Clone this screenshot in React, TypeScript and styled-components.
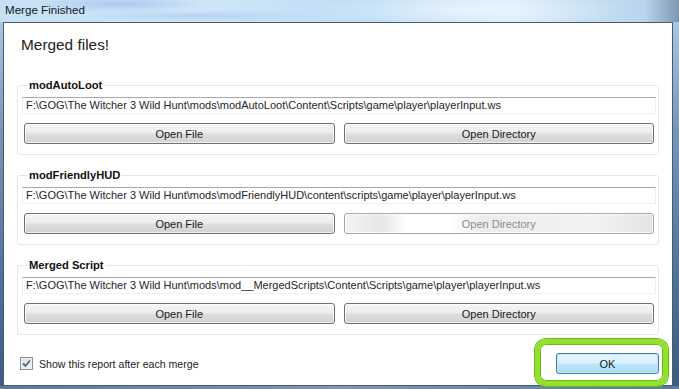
import React, { useState } from 'react'
import styled, { createGlobalStyle } from 'styled-components'

const GlobalStyle = createGlobalStyle`
  html, body {
    margin: 0;
    padding: 0;
    width: 679px;
    height: 389px;
    overflow: hidden;
    background: #3d5f86;
  }
  * {
    box-sizing: border-box;
  }
`

const Screen = styled.div`
  width: 679px;
  height: 389px;
  display: flex;
  flex-direction: column;
  font-family: 'Liberation Sans', Arial, sans-serif;
  color: #1e1e1e;
  background: linear-gradient(180deg, #9fc3e4 0px, #6e93b8 120px, #45688f 260px, #34557b 389px);
`

const TitleBar = styled.div`
  height: 22px;
  flex: none;
  display: flex;
  align-items: center;
  padding: 0 0 3px 5px;
  font-size: 11.6px;
  color: #101820;
  background:
    radial-gradient(ellipse 90px 8px at 120px 4px, rgba(120, 150, 230, 0.35), transparent),
    radial-gradient(ellipse 120px 6px at 200px 16px, rgba(140, 160, 230, 0.3), transparent),
    radial-gradient(ellipse 160px 18px at 470px 10px, rgba(255, 255, 255, 0.55), transparent),
    linear-gradient(90deg, #c6e0f4 0%, #cfe6f8 30%, #bddcf5 55%, #d5ecfb 75%, #b9d4ec 95%, #7d97b3 100%);
`

const FrameRow = styled.div`
  flex: 1;
  display: flex;
  min-height: 0;
`

const SideFrame = styled.div<{ $w: number }>`
  width: ${({ $w }) => $w}px;
  flex: none;
  background: linear-gradient(180deg, #a9c6e2 0%, #7696b9 30%, #4f7299 70%, #3a5c83 100%);
`

const Client = styled.div`
  flex: 1;
  display: flex;
  flex-direction: column;
  background: #ffffff;
  border: 1px solid #4a5a6c;
  padding: 0 13px;
`

const Heading = styled.div`
  font-size: 15.4px;
  line-height: 20px;
  padding: 12px 0 0 4px;
  height: 55px;
  color: #222;
`

const Groups = styled.div`
  display: flex;
  flex-direction: column;
  gap: 13px;
`

const Group = styled.fieldset`
  margin: 0;
  min-width: 0;
  border: 1px solid #e6e6e6;
  border-radius: 3px;
  padding: 0 2px 10px 4px;
`

const Legend = styled.legend`
  font-weight: bold;
  font-size: 11.2px;
  line-height: 14px;
  padding: 0 2px;
  margin-left: 5px;
  color: #111;
`

const PathBox = styled.div`
  margin-top: 5px;
  height: 17px;
  border-top: 1px solid #a9a9a9;
  border-left: 1px solid #ededed;
  border-right: 1px solid #ededed;
  border-bottom: 1px solid #f2f2f2;
  padding: 0 0 0 3px;
  font-size: 11px;
  line-height: 15px;
  color: #262626;
  white-space: nowrap;
  overflow: hidden;
`

const ButtonRow = styled.div`
  display: grid;
  grid-template-columns: 1fr 1fr;
  gap: 9px;
  padding: 0 2px;
  margin-top: 9px;
`

const WinButton = styled.button<{ $faded?: boolean }>`
  height: 21px;
  margin: 0;
  padding: 0;
  border: 1px solid ${({ $faded }) => ($faded ? '#a8a8a8' : '#707070')};
  border-radius: 3px;
  font-family: 'Liberation Sans', Arial, sans-serif;
  font-size: 11px;
  color: ${({ $faded }) => ($faded ? '#8c8c8c' : '#1a1a1a')};
  background: linear-gradient(180deg, #f6f6f6 0%, #ececec 48%, #dedede 52%, #d2d2d2 100%);
  box-shadow: inset 0 0 0 1px rgba(255, 255, 255, 0.7);
  cursor: default;
  ${({ $faded }) =>
    $faded &&
    `background: linear-gradient(90deg, #f4f4f4 0%, #e6e6e6 12%, #ffffff 20%, #ffffff 34%, #ececec 45%, #f3f3f3 80%, #e4e4e4 100%);`}
`

const Footer = styled.div`
  display: flex;
  align-items: center;
  justify-content: space-between;
  margin-top: 18px;
  padding-left: 3px;
`

const CheckLabel = styled.label`
  display: flex;
  align-items: center;
  gap: 6px;
  font-size: 10.6px;
  color: #222;
  user-select: none;
`

const CheckBox = styled.span<{ $checked: boolean }>`
  width: 13px;
  height: 13px;
  display: flex;
  align-items: center;
  justify-content: center;
  border: 1px solid #8f8f8f;
  background: linear-gradient(135deg, #dcdcdc 0%, #f4f4f4 100%);
  box-shadow: inset 0 0 0 1px #f0f0f0;
  svg {
    visibility: ${({ $checked }) => ($checked ? 'visible' : 'hidden')};
  }
`

const OkWrap = styled.div`
  position: relative;
  &::before {
    content: '';
    position: absolute;
    top: -14px;
    bottom: -12px;
    left: -21px;
    right: -9px;
    border: 5px solid #93e22a;
    border-radius: 11px;
    box-shadow: 0 0 0 1px #6fb51d, inset 0 0 0 1px #6fb51d;
    pointer-events: none;
  }
`

const OkButton = styled.button`
  width: 103px;
  height: 21px;
  margin: 0;
  padding: 0;
  border: 1px solid #3c7fb1;
  border-radius: 3px;
  font-family: 'Liberation Sans', Arial, sans-serif;
  font-size: 11px;
  color: #1a1a1a;
  background: linear-gradient(180deg, #eaf6fd 0%, #d9f0fc 48%, #bee6fd 52%, #a7d9f5 100%);
  box-shadow: inset 0 0 0 1px #c5e9f8;
  cursor: default;
`

const BottomFrame = styled.div`
  height: 3px;
  flex: none;
  background: linear-gradient(90deg, #5a7a9e, #7f98b5 50%, #5a7a9e);
`

type MergeEntry = {
  name: string
  path: string
  fadedDir?: boolean
}

const entries: MergeEntry[] = [
  {
    name: 'modAutoLoot',
    path: 'F:\\GOG\\The Witcher 3 Wild Hunt\\mods\\modAutoLoot\\Content\\Scripts\\game\\player\\playerInput.ws'
  },
  {
    name: 'modFriendlyHUD',
    path: 'F:\\GOG\\The Witcher 3 Wild Hunt\\mods\\modFriendlyHUD\\content\\scripts\\game\\player\\playerInput.ws',
    fadedDir: true
  },
  {
    name: 'Merged Script',
    path: 'F:\\GOG\\The Witcher 3 Wild Hunt\\mods\\mod__MergedScripts\\Content\\Scripts\\game\\player\\playerInput.ws'
  }
]

function CheckMark() {
  return (
    <svg width="9" height="9" viewBox="0 0 9 9">
      <path d="M1 4.5 L3.5 7 L8 1.5" fill="none" stroke="#4a6a8a" strokeWidth="1.8" />
    </svg>
  )
}

export default function App() {
  const [showReport, setShowReport] = useState(true)

  return (
    <Screen>
      <GlobalStyle />
      <TitleBar>Merge Finished</TitleBar>
      <FrameRow>
        <SideFrame $w={3} />
        <Client>
          <Heading>Merged files!</Heading>
          <Groups>
            {entries.map(entry => (
              <Group key={entry.name}>
                <Legend>{entry.name}</Legend>
                <PathBox>{entry.path}</PathBox>
                <ButtonRow>
                  <WinButton>Open File</WinButton>
                  <WinButton $faded={entry.fadedDir}>Open Directory</WinButton>
                </ButtonRow>
              </Group>
            ))}
          </Groups>
          <Footer>
            <CheckLabel onClick={() => setShowReport(s => !s)}>
              <CheckBox $checked={showReport}>
                <CheckMark />
              </CheckBox>
              Show this report after each merge
            </CheckLabel>
            <OkWrap>
              <OkButton>OK</OkButton>
            </OkWrap>
          </Footer>
        </Client>
        <SideFrame $w={6} />
      </FrameRow>
      <BottomFrame />
    </Screen>
  )
}
